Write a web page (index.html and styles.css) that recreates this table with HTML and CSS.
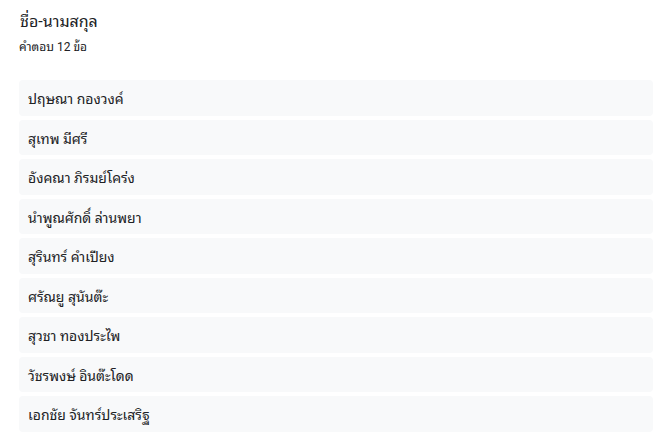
FILE: index.html
```html
<!DOCTYPE html>
<html lang="th">
<head>
  <meta charset="UTF-8">
  <meta name="viewport" content="width=device-width, initial-scale=1">
  <title>ชื่อ-นามสกุล</title>
  <link rel="stylesheet" href="styles.css">
</head>
<body>
  <!-- สรุปคำตอบของคำถาม -->
  <div class="question">
    <div class="question-title">ชื่อ-นามสกุล</div>
    <div class="question-count">คำตอบ 12 ข้อ</div>

    <div class="answers">
      <div class="answer">ปฤษณา กองวงค์</div>
      <div class="answer">สุเทพ มีศรี</div>
      <div class="answer">อังคณา ภิรมย์โคร่ง</div>
      <div class="answer">นำพูณศักดิ์ ล่านพยา</div>
      <div class="answer">สุรินทร์ คำเปียง</div>
      <div class="answer">ศรัณยู สุนันต๊ะ</div>
      <div class="answer">สุวชา ทองประไพ</div>
      <div class="answer">วัชรพงษ์ อินต๊ะโดด</div>
      <div class="answer">เอกชัย จันทร์ประเสริฐ</div>
    </div>
  </div>
</body>
</html>
```

FILE: styles.css
```css
* {
  margin: 0;
  padding: 0;
  box-sizing: border-box;
}
body {
  font-family: Roboto, "Noto Sans Thai Looped", sans-serif;
  background: #fff;
  color: #202124;
}

.question {
  padding: 12px 8px 0 19px;
}
.question-title {
  font-size: 16px;
  line-height: 20px;
  padding-left: 1px;
}
.question-count {
  font-size: 12px;
  line-height: 16px;
  margin-top: 7px;
}

/* รายการคำตอบ */
.answers {
  margin-top: 25px;
  display: flex;
  flex-direction: column;
  gap: 4px;
}
.answer {
  background: #f8f9fa;
  border-radius: 4px;
  height: 35.5px;
  padding: 0 9px;
  display: flex;
  align-items: center;
  font-size: 14px;
}
```
